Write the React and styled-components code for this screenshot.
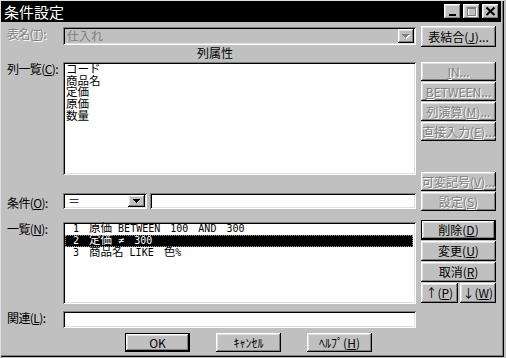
import React from 'react';
import styled, { createGlobalStyle, css } from 'styled-components';

const FONT = `"Noto Sans CJK JP", "Noto Sans", sans-serif`;
const MONO = `"DejaVu Sans Mono", "Liberation Mono", monospace`;

const GlobalStyle = createGlobalStyle`
  *, *::before, *::after { box-sizing: border-box; }
  html, body { margin: 0; padding: 0; background: #c0c0c0; }
  body { font-family: ${FONT}; font-size: 12px; color: #000; }
`;

const raised = css`
  background: #c0c0c0;
  box-shadow: inset -1px -1px #000, inset 1px 1px #fff, inset -2px -2px #808080, inset 2px 2px #dfdfdf;
`;

const defaultRaised = css`
  background: #c0c0c0;
  box-shadow: inset 0 0 0 1px #000, inset -2px -2px #000, inset 2px 2px #fff, inset -3px -3px #808080, inset 3px 3px #dfdfdf;
`;

const sunken = css`
  box-shadow: inset 1px 1px #808080, inset -1px -1px #fff, inset 2px 2px #000, inset -2px -2px #dfdfdf;
`;

const Window = styled.div`
  width: 504px;
  height: 357px;
  padding: 1px 3px 2px 1px;
  background: #c0c0c0;
  box-shadow: inset 1px 1px #dfdfdf, inset -1px -1px #000, inset -2px -2px #808080;
  display: flex;
  flex-direction: column;
  font-family: ${FONT};
`;

const TitleBar = styled.div`
  height: 21px;
  flex: none;
  background: #000;
  display: flex;
  align-items: center;
  padding: 0 2px 0 3px;
`;

const Caption = styled.div`
  color: #fff;
  font-size: 15px;
  line-height: 21px;
`;

const Controls = styled.div`
  margin-left: auto;
  display: flex;
  gap: 2px;
`;

const CtrlButton = styled.button`
  width: 17px;
  height: 15px;
  padding: 0;
  margin: 0;
  border: 0;
  ${raised};
  svg { display: block; }
`;

const Body = styled.div`
  flex: 1;
  display: flex;
  flex-direction: column;
  padding: 4px 0 0 6px;
`;

const Columns = styled.div`
  display: flex;
  gap: 5px;
`;

const LeftPane = styled.div`
  width: 409px;
  display: flex;
  flex-direction: column;
`;

const RightPane = styled.div`
  width: 75px;
  display: flex;
  flex-direction: column;
`;

const Row = styled.div`
  display: flex;
  align-items: flex-start;
  margin-top: ${p => p.$mt || 0}px;
`;

const Label = styled.div`
  width: 56px;
  flex: none;
  font-size: 12px;
  line-height: 14px;
  letter-spacing: -0.6px;
  white-space: nowrap;
  padding-top: ${p => p.$pt || 0}px;
  color: ${p => (p.$disabled ? '#808080' : '#000')};
  ${p => p.$disabled && css`text-shadow: 1px 1px 0 #fff;`}
`;

const Header = styled.div`
  margin-top: 1px;
  height: 14px;
  line-height: 14px;
  padding-left: 190px;
  font-size: 12px;
`;

const FieldGroup = styled.div`
  flex: 1;
  display: flex;
  gap: 3px;
`;

const Combo = styled.div`
  ${sunken};
  background: ${p => (p.$disabled ? '#c0c0c0' : '#fff')};
  width: ${p => (p.$w ? `${p.$w}px` : 'auto')};
  flex: ${p => (p.$w ? 'none' : '1')};
  height: ${p => p.$h}px;
  padding: 2px;
  display: flex;
  align-items: stretch;
`;

const ComboValue = styled.div`
  flex: 1;
  display: flex;
  align-items: center;
  padding-left: ${p => p.$pl}px;
  font-size: 12px;
  line-height: 12px;
  color: ${p => (p.$disabled ? '#808080' : '#000')};
`;

const DropButton = styled.div`
  width: ${p => p.$w}px;
  flex: none;
  ${raised};
  display: flex;
  align-items: center;
  justify-content: center;
  svg { display: block; }
`;

const TextField = styled.div`
  ${sunken};
  background: #fff;
  flex: 1;
  height: ${p => p.$h}px;
`;

const ListBox = styled.div`
  ${sunken};
  background: #fff;
  width: 353px;
  height: ${p => p.$h}px;
  padding: 1px 2px 2px 2px;
`;

const ColumnItem = styled.div`
  font-size: 11.5px;
  line-height: 11.7px;
  height: 11.7px;
  padding-left: 1px;
  white-space: nowrap;
`;

const CondItem = styled.div`
  height: 12px;
  line-height: 12px;
  font-family: ${MONO};
  font-size: 10px;
  white-space: pre;
  word-spacing: 4px;
  padding-left: 8px;
  margin-right: 1px;
  color: ${p => (p.$selected ? '#fff' : '#000')};
  background: ${p => (p.$selected ? '#000' : 'transparent')};
  ${p => p.$selected && css`
    outline: 1px dotted #9a9a9a;
    outline-offset: -1px;
  `}
`;

const Jp = styled.span`
  font-family: ${FONT};
  font-size: 11.5px;
  line-height: 0;
  margin-right: ${p => (p.$tight ? -4 : 0)}px;
`;

const Button = styled.button`
  appearance: none;
  border: 0;
  margin: 0;
  padding: 0;
  width: ${p => (p.$w ? `${p.$w}px` : '100%')};
  height: ${p => p.$h}px;
  flex: ${p => (p.$grow ? '1' : 'none')};
  font-family: ${FONT};
  font-size: 12px;
  line-height: 12px;
  white-space: nowrap;
  display: flex;
  align-items: center;
  justify-content: center;
  color: #000;
  ${p => (p.$default ? defaultRaised : raised)};
  &:disabled {
    color: #808080;
    text-shadow: 1px 1px 0 #fff;
  }
`;

const ButtonStack = styled.div`
  display: flex;
  flex-direction: column;
  gap: 1px;
  margin-top: ${p => p.$mt || 0}px;
`;

const ArrowRow = styled.div`
  display: flex;
  gap: 2px;
`;

const Footer = styled.div`
  display: flex;
  justify-content: center;
  gap: 26px;
  margin-top: 5px;
  padding-right: 11px;
`;

const Arrow = ({ color = '#000', shadow }) => (
  <svg width="8" height="5" viewBox="0 0 8 5" shapeRendering="crispEdges">
    {shadow && <path d="M1 1h7l-3.5 4z" fill="#fff" />}
    <path d="M0 0h7l-3.5 4z" fill={color} />
  </svg>
);

const MinIcon = () => (
  <svg width="17" height="15" viewBox="0 0 17 15" shapeRendering="crispEdges">
    <rect x="5" y="10" width="7" height="2" fill="#000" />
  </svg>
);

const MaxIcon = () => (
  <svg width="17" height="15" viewBox="0 0 17 15" shapeRendering="crispEdges">
    <rect x="5" y="4" width="8" height="8" fill="none" stroke="#fff" strokeWidth="1" />
    <rect x="4" y="3" width="8" height="8" fill="none" stroke="#808080" strokeWidth="1" />
    <rect x="4" y="3" width="8" height="2" fill="#808080" />
  </svg>
);

const CloseIcon = () => (
  <svg width="17" height="15" viewBox="0 0 17 15">
    <path d="M4.5 3.5l8 7.5M12.5 3.5l-8 7.5" stroke="#000" strokeWidth="2" />
  </svg>
);

const columns = ['コード', '商品名', '定価', '原価', '数量'];

const conditions = [
  { no: '1', col: '原価', rest: 'BETWEEN 100 AND 300' },
  { no: '2', col: '定価', rest: '≠ 300', selected: true },
  { no: '3', col: '商品名', rest: 'LIKE ', tail: '色', tailRest: '%' },
];

const Mn = ({ children }) => <u>{children}</u>;

export default function App() {
  return (
    <>
      <GlobalStyle />
      <Window>
        <TitleBar>
          <Caption>条件設定</Caption>
          <Controls>
            <CtrlButton aria-label="最小化"><MinIcon /></CtrlButton>
            <CtrlButton aria-label="最大化"><MaxIcon /></CtrlButton>
            <CtrlButton aria-label="閉じる"><CloseIcon /></CtrlButton>
          </Controls>
        </TitleBar>
        <Body>
          <Columns>
            <LeftPane>
              <Row $mt={1}>
                <Label $disabled>表名(<Mn>T</Mn>):</Label>
                <Combo $disabled $h={18}>
                  <ComboValue $pl={2} $disabled>仕入れ</ComboValue>
                  <DropButton $w={16}><Arrow color="#808080" shadow /></DropButton>
                </Combo>
              </Row>
              <Header>列属性</Header>
              <Row $mt={2}>
                <Label>列一覧(<Mn>C</Mn>):</Label>
                <ListBox $h={113}>
                  {columns.map(c => <ColumnItem key={c}>{c}</ColumnItem>)}
                </ListBox>
              </Row>
              <Row $mt={18}>
                <Label $pt={3}>条件(<Mn>O</Mn>):</Label>
                <FieldGroup>
                  <Combo $w={84} $h={16}>
                    <ComboValue $pl={3}>＝</ComboValue>
                    <DropButton $w={17}><Arrow /></DropButton>
                  </Combo>
                  <TextField $h={16} />
                </FieldGroup>
              </Row>
              <Row $mt={12}>
                <Label>一覧(<Mn>N</Mn>):</Label>
                <ListBox $h={82}>
                  {conditions.map(c => (
                    <CondItem key={c.no} $selected={c.selected}>
                      {c.no} <Jp $tight>{c.col}</Jp> {c.rest}
                      {c.tail && <Jp>{c.tail}</Jp>}
                      {c.tailRest}
                    </CondItem>
                  ))}
                </ListBox>
              </Row>
              <Row $mt={7}>
                <Label>関連(<Mn>L</Mn>):</Label>
                <TextField $h={17} />
              </Row>
            </LeftPane>
            <RightPane>
              <Button $h={21}>表結合(<Mn>J</Mn>)...</Button>
              <ButtonStack $mt={15}>
                <Button $h={19} disabled><Mn>I</Mn>N...</Button>
                <Button $h={19} disabled><Mn>B</Mn>ETWEEN...</Button>
                <Button $h={19} disabled>列演算(<Mn>M</Mn>)...</Button>
                <Button $h={19} disabled>直接入力(<Mn>E</Mn>)...</Button>
              </ButtonStack>
              <ButtonStack $mt={31}>
                <Button $h={19} disabled>可変記号(<Mn>V</Mn>)...</Button>
                <Button $h={19} disabled>設定(<Mn>S</Mn>)</Button>
              </ButtonStack>
              <ButtonStack $mt={9}>
                <Button $h={20} $default>削除(<Mn>D</Mn>)</Button>
                <Button $h={20}>変更(<Mn>U</Mn>)</Button>
                <Button $h={20}>取消(<Mn>R</Mn>)</Button>
                <ArrowRow>
                  <Button $h={20} $grow>↑(<Mn>P</Mn>)</Button>
                  <Button $h={20} $grow>↓(<Mn>W</Mn>)</Button>
                </ArrowRow>
              </ButtonStack>
            </RightPane>
          </Columns>
          <Footer>
            <Button $w={65} $h={19} $default>OK</Button>
            <Button $w={65} $h={19}>ｷｬﾝｾﾙ</Button>
            <Button $w={65} $h={19}>ﾍﾙﾌﾟ(<Mn>H</Mn>)</Button>
          </Footer>
        </Body>
      </Window>
    </>
  );
}
